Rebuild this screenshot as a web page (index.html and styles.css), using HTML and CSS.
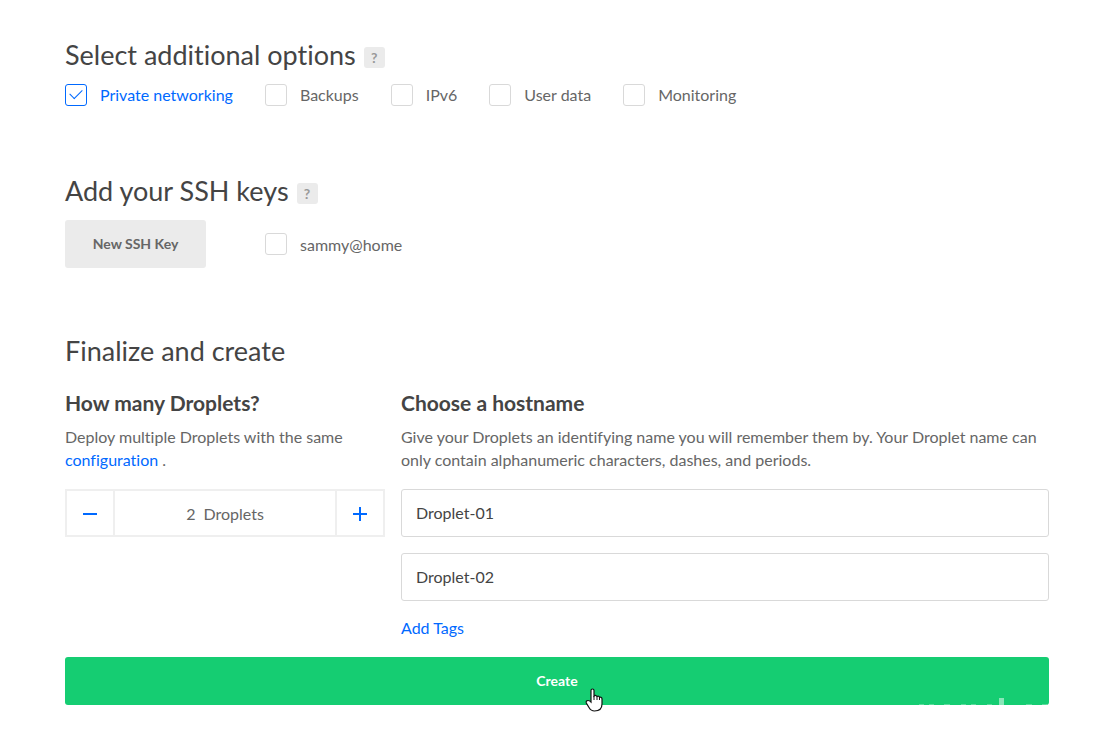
FILE: index.html
```html
<!DOCTYPE html>
<html lang="en">
<head>
<meta charset="utf-8">
<title>Create Droplets</title>
<link rel="stylesheet" href="styles.css">
</head>
<body>
<form class="page">
  <section class="section">
    <h2 class="title">Select additional options <button type="button" class="help" aria-label="Help with options">?</button></h2>
    <div class="options">
      <label class="option"><input type="checkbox" class="check" checked><span>Private networking</span></label>
      <label class="option"><input type="checkbox" class="check"><span>Backups</span></label>
      <label class="option"><input type="checkbox" class="check"><span>IPv6</span></label>
      <label class="option"><input type="checkbox" class="check"><span>User data</span></label>
      <label class="option"><input type="checkbox" class="check"><span>Monitoring</span></label>
    </div>
  </section>

  <section class="section section-keys">
    <h2 class="title">Add your SSH keys <button type="button" class="help" aria-label="Help with SSH keys">?</button></h2>
    <div class="keys">
      <button type="button" class="new-key">New SSH Key</button>
      <label class="option"><input type="checkbox" class="check"><span>sammy@home</span></label>
    </div>
  </section>

  <section class="section section-final">
    <h2 class="title">Finalize and create</h2>
    <div class="columns">
      <div class="column">
        <h3 class="subtitle">How many Droplets?</h3>
        <p class="text">Deploy multiple Droplets with the same <a class="link" href="#">configuration</a> .</p>
        <div class="stepper">
          <button type="button" class="step" aria-label="Fewer Droplets"><svg width="16" height="16" viewBox="0 0 16 16"><path d="M1 9h14" stroke="currentColor" stroke-width="2"/></svg></button>
          <output class="count"><span>2</span><span>Droplets</span></output>
          <button type="button" class="step" aria-label="More Droplets"><svg width="16" height="16" viewBox="0 0 16 16"><path d="M1 9h14M8 2v14" stroke="currentColor" stroke-width="2"/></svg></button>
        </div>
      </div>
      <div class="column">
        <h3 class="subtitle">Choose a hostname</h3>
        <p class="text">Give your Droplets an identifying name you will remember them by. Your Droplet name can only contain alphanumeric characters, dashes, and periods.</p>
        <div class="hosts">
          <input class="host" type="text" aria-label="First hostname" value="Droplet-01">
          <input class="host" type="text" aria-label="Second hostname" value="Droplet-02">
        </div>
        <a class="link tags" href="#">Add Tags</a>
      </div>
    </div>
  </section>

  <div class="submit">
    <button type="button" class="create">Create</button>
    <svg class="watermark" width="132" height="8" viewBox="0 0 132 8" aria-hidden="true"><g fill="#fff"><path opacity=".5" d="M82 1h5v7h-5z"/><path opacity=".3" d="M2 7h5v1H2zM12 7h5v1h-5zM27 7h6v1h-6zM44 7h5v1h-5zM54 7h5v1h-5zM70 7h5v1h-5zM109 7h6v1h-6zM125 7h5v1h-5z"/></g></svg>
    <svg class="cursor" width="18" height="24" viewBox="0 0 18 24" aria-hidden="true"><path d="M6 14V2.500Q6 1 7.500 1T9 2.500V8q1.500-1.500 3 .5 2-1 2.500.8Q17 8.700 17 11v5q0 7-7.500 7-3.500 0-5.500-3.500L1.300 15Q.7 12.500 3 12.500 4.500 12.500 6 14z" fill="#fff" stroke="#111" stroke-width="1.200"/><path d="M9 8v4M12 8.500V12M14.500 9.500V12" stroke="#111" fill="none"/></svg>
  </div>
</form>
</body>
</html>
```
FILE: styles.css
```css
* { box-sizing: border-box; }
body {
  margin: 0;
  background: #fff;
  color: #666;
  font: 16px/23px Lato, "Open Sans", sans-serif;
  font-variant-ligatures: none;
}
button, input { font: inherit; }
.page { padding: 37px 62px 40px 65px; }
.section-keys { margin-top: 67px; }
.section-final { margin-top: 65px; }
.title {
  display: flex;
  align-items: center;
  gap: 8px;
  margin: 0;
  color: #444;
  font-size: 27px;
  font-weight: 400;
  line-height: 36px;
}
.help {
  width: 21px;
  height: 21px;
  margin-top: 5px;
  padding: 0;
  border: 0;
  border-radius: 3px;
  background: #ebebeb;
  color: #999;
  font-size: 14px;
  font-weight: 700;
  line-height: 21px;
}
.options {
  display: flex;
  flex-wrap: wrap;
  gap: 16px 32px;
  margin-top: 10px;
}
.option { display: flex; align-items: center; gap: 13px; }
.check {
  appearance: none;
  width: 22px;
  height: 22px;
  margin: 0;
  border: 1px solid #d9d9d9;
  border-radius: 3px;
  background: #fff;
}
.check:checked {
  display: grid;
  place-items: center;
  border-color: #0069ff;
}
.check:checked::before {
  content: "";
  width: 11px;
  height: 6px;
  margin-bottom: 4px;
  border: solid #0069ff;
  border-width: 0 0 1px 1px;
  transform: rotate(-45deg);
}
.check:checked + span { color: #0069ff; }
.keys { display: flex; align-items: center; gap: 59px; margin-top: 11px; }
.new-key {
  width: 141px;
  height: 48px;
  padding: 0 0 2px;
  border: 0;
  border-radius: 3px;
  background: #ebebeb;
  color: #666;
  font-size: 14px;
  font-weight: 700;
}
.columns {
  display: grid;
  grid-template-columns: 320fr 648fr;
  gap: 16px;
  margin-top: 20px;
}
.subtitle {
  margin: 0 0 8px;
  color: #444;
  font-size: 21px;
  font-weight: 700;
  line-height: 28px;
}
.text { margin: 0 0 18px; }
.link { color: #0069ff; text-decoration: none; }
.stepper { display: flex; height: 48px; border: 2px solid #efefef; }
.step {
  display: grid;
  place-items: center;
  width: 46px;
  padding: 0;
  border: 0;
  background: #fff;
  color: #0069ff;
}
.count {
  display: flex;
  flex: 1;
  justify-content: center;
  align-items: center;
  gap: 8px;
  border: solid #efefef;
  border-width: 0 2px;
}
.hosts { display: grid; gap: 16px; }
.host {
  width: 100%;
  height: 48px;
  padding: 0 14px 2px;
  border: 1px solid #d9d9d9;
  border-radius: 3px;
  background: #fff;
  color: #444;
}
.tags { display: block; margin-top: 15px; }
.submit { position: relative; margin-top: 18px; }
.create {
  display: block;
  width: 100%;
  height: 48px;
  padding: 0 0 2px;
  border: 0;
  border-radius: 3px;
  background: #15cd72;
  color: #fff;
  font-size: 14px;
  font-weight: 700;
}
.watermark { position: absolute; right: 0; bottom: 0; }
.cursor { position: absolute; left: calc(50% + 28px); bottom: -7px; }
```
